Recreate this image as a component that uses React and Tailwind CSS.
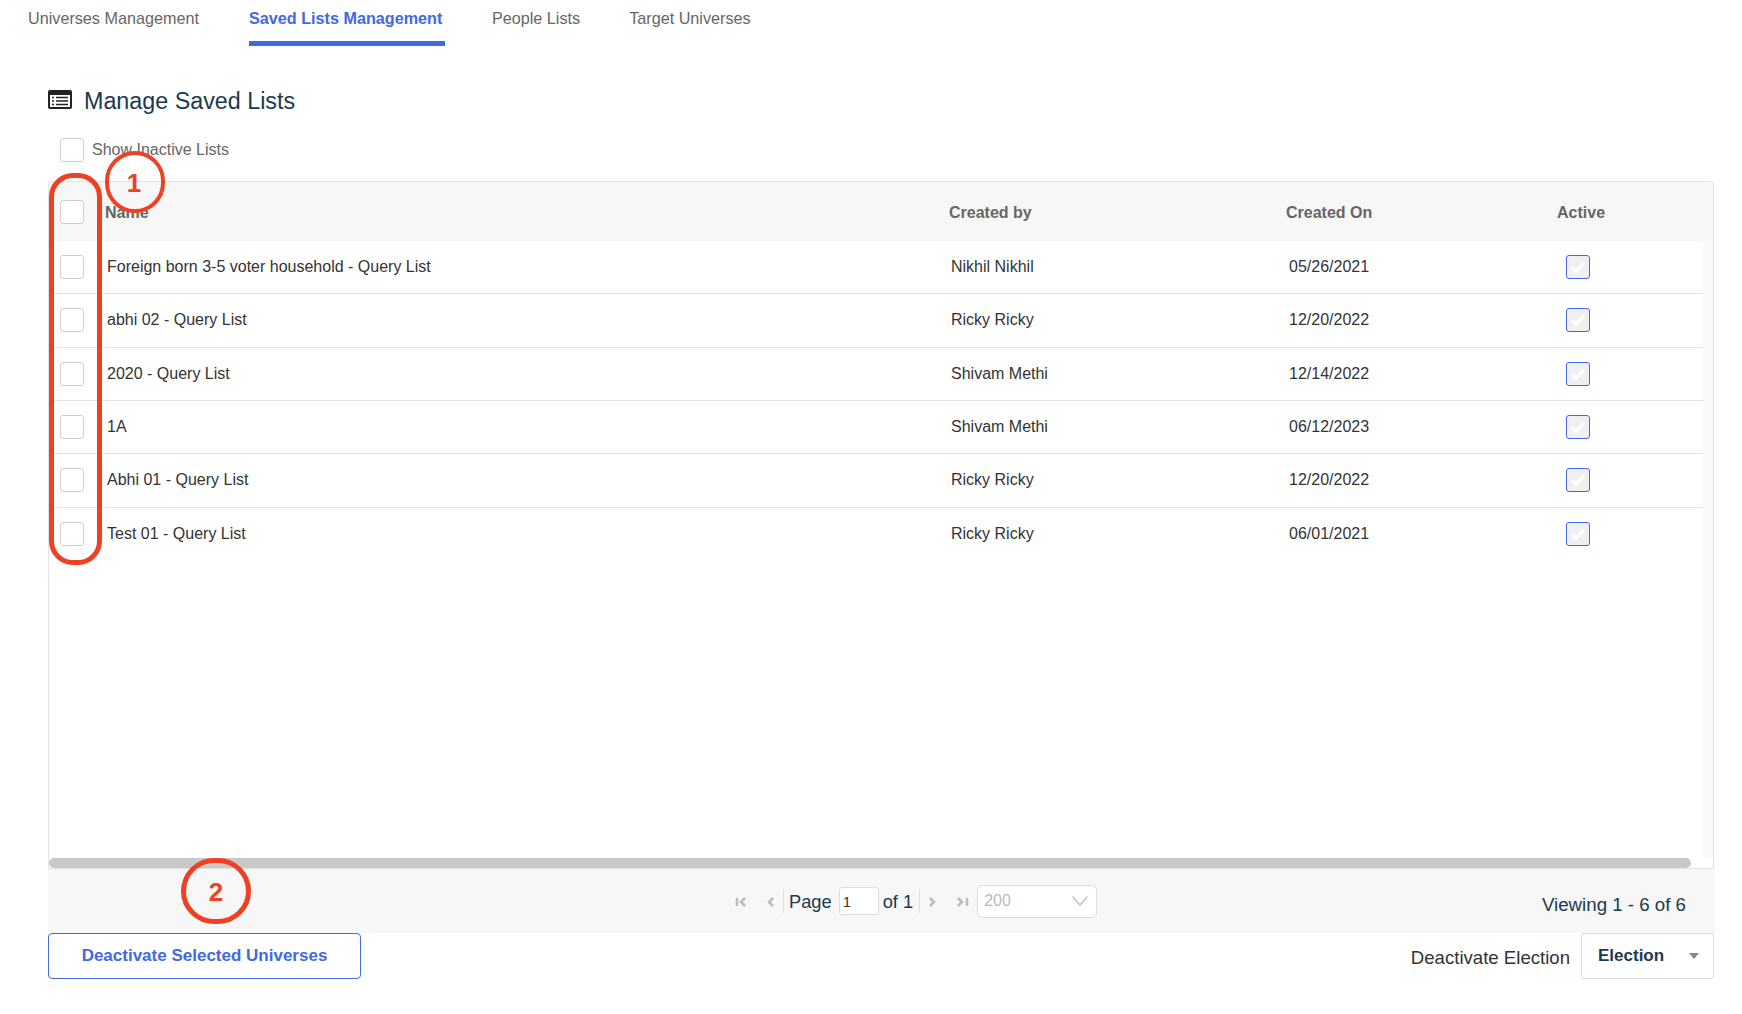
import React from "react";

const rows = [
  ["Foreign born 3-5 voter household - Query List", "Nikhil Nikhil", "05/26/2021"],
  ["abhi 02 - Query List", "Ricky Ricky", "12/20/2022"],
  ["2020 - Query List", "Shivam Methi", "12/14/2022"],
  ["1A", "Shivam Methi", "06/12/2023"],
  ["Abhi 01 - Query List", "Ricky Ricky", "12/20/2022"],
  ["Test 01 - Query List", "Ricky Ricky", "06/01/2021"],
];

function Box() {
  return <div className="w-[24px] h-[24px] border border-[#d0d0d0] rounded-[3px] bg-white shrink-0" />;
}

function Checked() {
  return (
    <div className="w-[24px] h-[24px] border border-[#4169e1] rounded-[3px] bg-[#f0f0f0] flex items-center justify-center">
      <svg width="16" height="14" viewBox="0 0 16 14">
        <path d="M2 7.500l4 4 8-9" fill="none" stroke="#fff" strokeWidth="3.200" />
      </svg>
    </div>
  );
}

function Chev({ d }) {
  return (
    <svg width="14" height="14" viewBox="0 0 14 14" className="shrink-0 mt-[2px]">
      <path d={d} fill="none" stroke="#b4bec5" strokeWidth="2.500" />
    </svg>
  );
}

export default function App() {
  return (
    <div className="relative w-full h-[1014px] bg-white overflow-hidden font-['Liberation_Sans',Arial,sans-serif]">
      <nav className="flex h-[46px] pl-[28px] gap-[49px] text-[16.2px] text-[#666]">
        <span className="pt-[6px]">Universes Management</span>
        <span className="pt-[6px] ml-[1px] w-[196px] font-bold text-[#4169e1] border-b-[5px] border-[#4169e1]">Saved Lists Management</span>
        <span className="pt-[6px] -ml-[2px]">People Lists</span>
        <span className="pt-[6px]">Target Universes</span>
      </nav>

      <div className="flex items-center h-[24px] mt-[44px] pl-[48px]">
        <svg width="24" height="20" viewBox="0 0 24 20" className="shrink-0 -mt-[4px]">
          <rect x="0" y="0" width="24" height="19" rx="2" fill="#222" />
          <rect x="2" y="5" width="20" height="12" fill="#fff" />
          <path d="M4 7.500h2M8 7.500h12M4 11h2M8 11h12M4 14.500h2M8 14.500h12" stroke="#222" strokeWidth="1.600" />
        </svg>
        <h1 className="ml-[12px] text-[23.3px] leading-none text-[#1a3a4f]">Manage Saved Lists</h1>
      </div>

      <div className="flex items-center mt-[24px] pl-[60px] h-[24px]">
        <Box />
        <span className="ml-[8px] text-[16px] text-[#666]">Show Inactive Lists</span>
      </div>

      <div className="mt-[19px] ml-[48px] mr-[28px] h-[688px] border border-[#e2e2e2] rounded-t-[4px] flex flex-col bg-white overflow-hidden">
        <div className="h-[59px] shrink-0 bg-[#f7f7f7] grid grid-cols-[45px_844px_337px_271px_auto] pl-[11px] items-center text-[16px] font-bold text-[#666]">
          <Box />
          <span className="pt-[2px]">Name</span>
          <span className="pt-[2px]">Created by</span>
          <span className="pt-[2px]">Created On</span>
          <span className="pt-[2px]">Active</span>
        </div>
        <div className="flex-1 flex min-h-0">
          <div className="flex-1">
            {rows.map((r, i) => (
              <div
                key={i}
                className={`h-[53.33px] grid grid-cols-[47px_844px_338px_277px_auto] pl-[11px] items-center text-[16px] text-[#333] ${i < 5 ? "border-b border-[#e2e2e2]" : ""}`}
              >
                <Box />
                <span>{r[0]}</span>
                <span>{r[1]}</span>
                <span>{r[2]}</span>
                <Checked />
              </div>
            ))}
          </div>
          <div className="w-[10px] bg-[#f9f9f9]" />
        </div>
        <div className="h-[10px] shrink-0 flex">
          <div className="w-[1642px] h-[10px] rounded-[5px] bg-[#c8c8c8]" />
        </div>
      </div>

      <div className="ml-[48px] mr-[28px] h-[64px] bg-[#f7f7f7] flex items-center pl-[687px] pr-[28px] text-[#1a3a4f]">
        <Chev d="M2 3v8M10 3L6 7l4 4" />
        <div className="ml-[14px]"><Chev d="M10 3L6 7l4 4" /></div>
        <div className="ml-[6px] w-px h-[24px] bg-[#e2e2e2]" />
        <span className="ml-[5px] pt-[2px] text-[18.300px]">Page</span>
        <div className="ml-[7px] w-[40px] h-[28px] bg-white border border-[#ddd] rounded-[3px] pl-[3px] text-[15px] leading-[28px] text-[#333]">1</div>
        <span className="ml-[4px] pt-[2px] text-[18.300px]">of 1</span>
        <div className="ml-[6px] w-px h-[24px] bg-[#e2e2e2]" />
        <div className="ml-[6px]"><Chev d="M4 3l4 4-4 4" /></div>
        <div className="ml-[15px]"><Chev d="M3 3l4 4-4 4M12 3v8" /></div>
        <div className="ml-[8px] w-[120px] h-[33px] bg-white border border-[#ddd] rounded-[5px] flex items-center justify-between pl-[6px] pr-[8px] text-[16px] text-[#bbb]">
          <span>200</span>
          <svg width="16" height="10" viewBox="0 0 16 10">
            <path d="M0.500 0.500L8 9l7.500-8.500" fill="none" stroke="#bbb" strokeWidth="1.300" />
          </svg>
        </div>
        <span className="ml-auto pt-[8px] text-[18.700px]">Viewing 1 - 6 of 6</span>
      </div>

      <div className="ml-[48px] mr-[28px] flex justify-between items-start">
        <button className="w-[313px] h-[46px] border border-[#4169e1] rounded-[4px] bg-white text-[17px] font-bold text-[#4169e1]">
          Deactivate Selected Universes
        </button>
        <div className="flex items-center h-[46px]">
          <span className="text-[18.600px] text-[#333] pt-[4px]">Deactivate Election</span>
          <div className="ml-[11px] w-[133px] h-[46px] border border-[#ddd] rounded-[2px] flex items-center justify-between pl-[16px] pr-[14px] text-[17px] font-bold text-[#1a3a4f]">
            <span>Election</span>
            <svg width="10" height="6" viewBox="0 0 10 6"><path d="M0 0h10L5 6z" fill="#888" /></svg>
          </div>
        </div>
      </div>

      <div className="absolute left-[49px] top-[173px] w-[53px] h-[392px] border-[5px] border-[#ee4023] rounded-[24px]" />
      <div className="absolute left-[105px] top-[151px] w-[60px] h-[62px] border-[4.500px] border-[#ee4023] rounded-full flex items-center justify-center pt-[2px] pr-[2px] text-[26px] font-bold text-[#ee4023]">1</div>
      <div className="absolute left-[181px] top-[858px] w-[70px] h-[66px] border-[5px] border-[#ee4023] rounded-full flex items-center justify-center pt-[2px] text-[26px] font-bold text-[#ee4023]">2</div>
    </div>
  );
}
